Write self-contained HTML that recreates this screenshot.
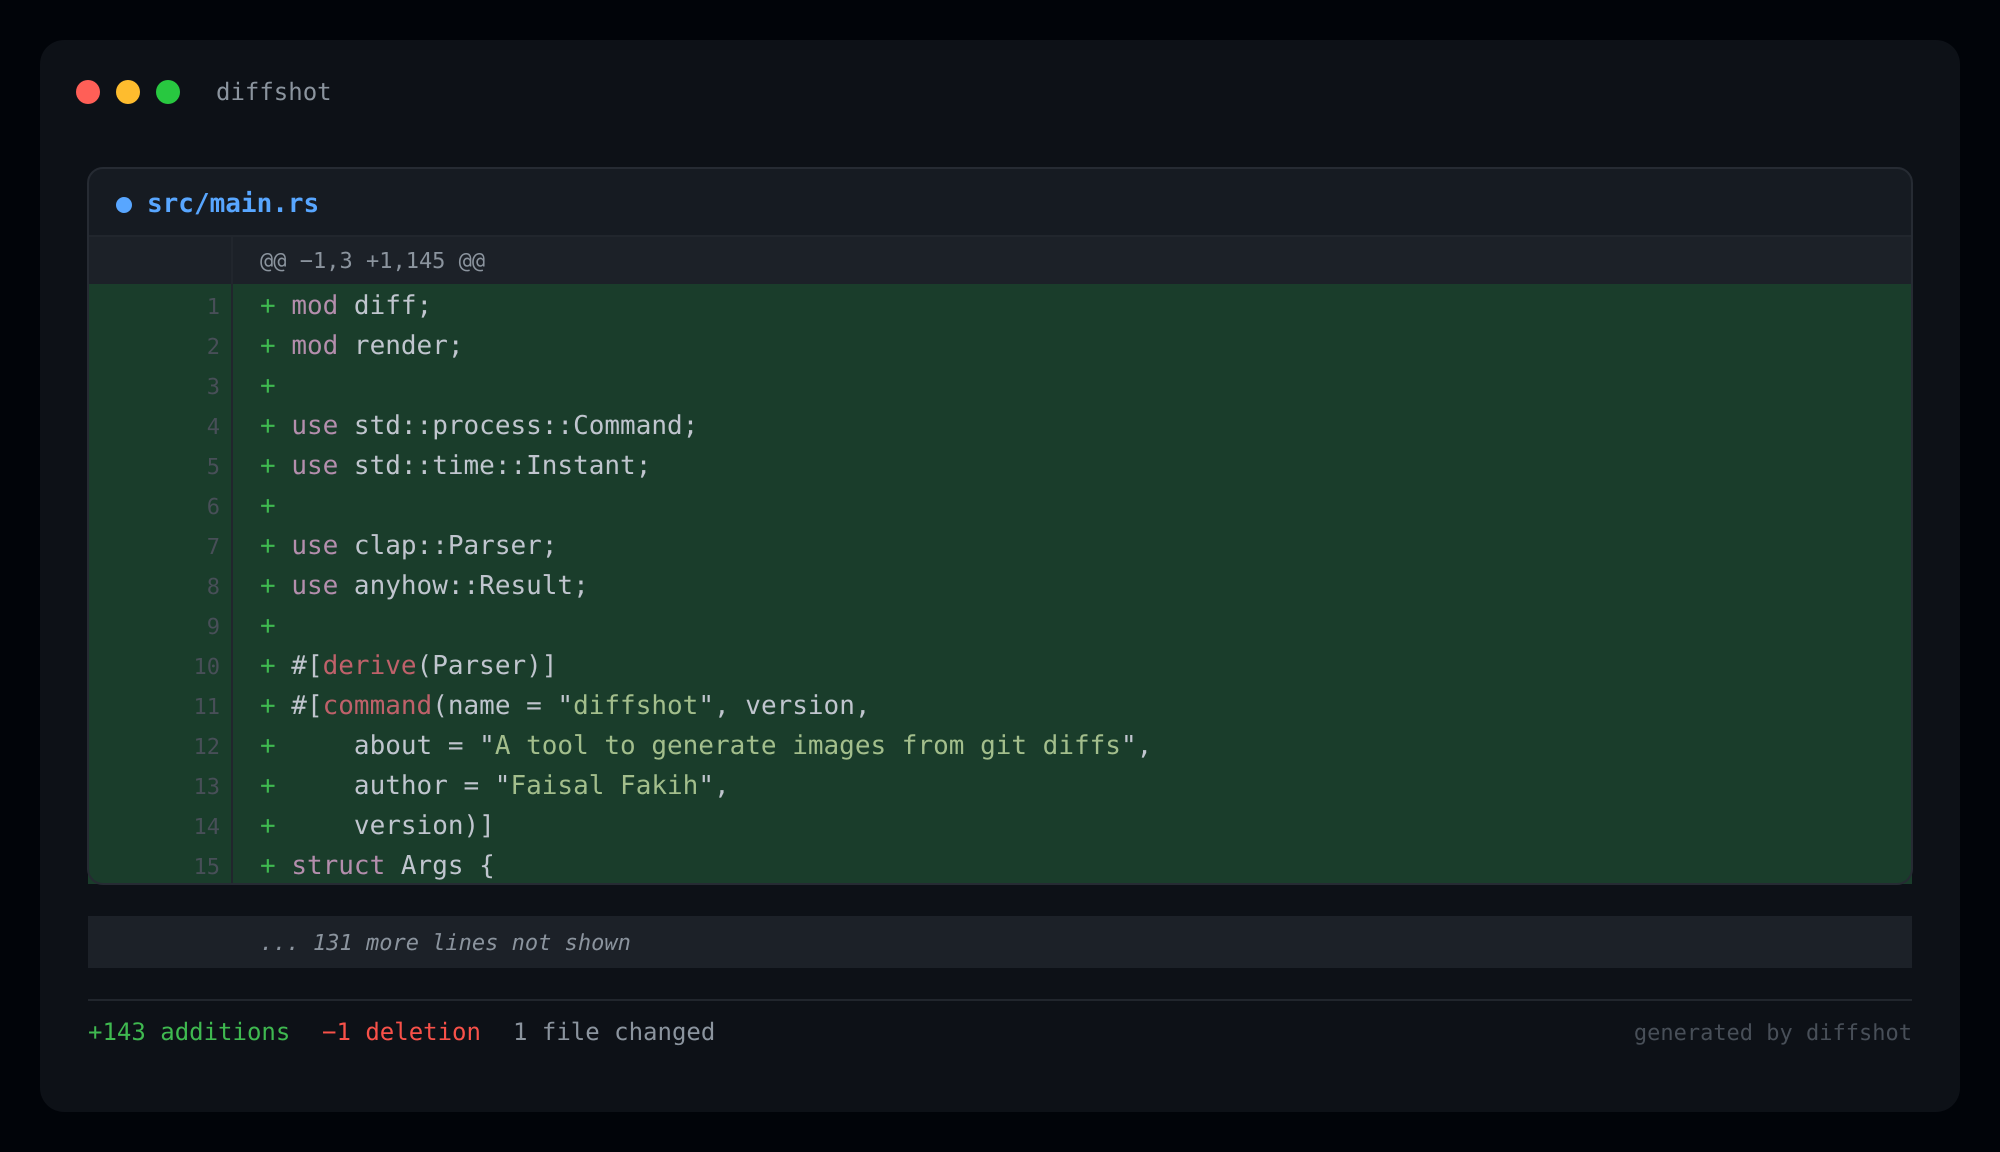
<!DOCTYPE html>
<html lang="en"><head><meta charset="utf-8"><title>diffshot</title>
<style>
*{box-sizing:border-box;margin:0;padding:0}
html,body{width:2000px;height:1152px;overflow:hidden;background:#010409}
body{position:relative;font-family:"DejaVu Sans Mono","Liberation Mono",monospace;text-rendering:geometricPrecision;font-kerning:none;font-variant-ligatures:none}
.a{position:absolute}
.t{position:absolute;white-space:pre}
#win{left:40px;top:40px;width:1920px;height:1072px;background:#0d1117;border-radius:24px}
.dot{width:24px;height:24px;border-radius:50%;top:80px}
#box{left:88px;top:168px;width:1824px;height:716px;background:#161b22;border-radius:15px}
#ring{left:87px;top:167px;width:1826px;height:718px;border:2px solid #262b33;border-radius:16px}
.row{position:absolute;left:88px;width:1824px;height:40px;background:#1a3d2b}
.g{position:absolute;left:143px;top:0;width:2px;height:100%;background:#21262d}
.n{position:absolute;left:0;width:132px;top:4px;text-align:right;font-size:22px;line-height:40px;color:#484f58}
.c{position:absolute;left:172px;top:3px;font-size:26px;line-height:39px;color:#c0c5ce;white-space:pre}
.p{color:#3fb950}.k{color:#b48ead}.s{color:#a3be8c}.r{color:#bf616a}
</style></head><body>
<div class="a" id="win"></div>
<div class="a dot" style="left:76px;background:#ff5f57"></div>
<div class="a dot" style="left:116px;background:#febc2e"></div>
<div class="a dot" style="left:156px;background:#28c840"></div>
<div class="t" style="left:216px;top:74px;font-size:24px;line-height:36px;color:#8b949e">diffshot</div>
<div class="a" id="box"></div>
<div class="a" style="left:116px;top:197px;width:16px;height:16px;border-radius:50%;background:#58a6ff"></div>
<div class="t" style="left:147px;top:184px;font-size:26px;line-height:40px;font-weight:700;color:#58a6ff">src/main.rs</div>
<div class="a" style="left:88px;top:235px;width:1824px;height:2px;background:#21262d"></div>
<div class="a" style="left:88px;top:237px;width:1824px;height:47px;background:#1c2128"><div class="g"></div>
<div class="t" style="left:172px;top:5px;font-size:22px;line-height:40px;color:#8b949e">@@ −1,3 +1,145 @@</div></div>
<div class="row" style="top:284px"><div class="g"></div><div class="n">1</div><div class="c"><span class="p">+</span> <span class="k">mod</span> diff;</div></div>
<div class="row" style="top:324px"><div class="g"></div><div class="n">2</div><div class="c"><span class="p">+</span> <span class="k">mod</span> render;</div></div>
<div class="row" style="top:364px"><div class="g"></div><div class="n">3</div><div class="c"><span class="p">+</span> </div></div>
<div class="row" style="top:404px"><div class="g"></div><div class="n">4</div><div class="c"><span class="p">+</span> <span class="k">use</span> std::process::Command;</div></div>
<div class="row" style="top:444px"><div class="g"></div><div class="n">5</div><div class="c"><span class="p">+</span> <span class="k">use</span> std::time::Instant;</div></div>
<div class="row" style="top:484px"><div class="g"></div><div class="n">6</div><div class="c"><span class="p">+</span> </div></div>
<div class="row" style="top:524px"><div class="g"></div><div class="n">7</div><div class="c"><span class="p">+</span> <span class="k">use</span> clap::Parser;</div></div>
<div class="row" style="top:564px"><div class="g"></div><div class="n">8</div><div class="c"><span class="p">+</span> <span class="k">use</span> anyhow::Result;</div></div>
<div class="row" style="top:604px"><div class="g"></div><div class="n">9</div><div class="c"><span class="p">+</span> </div></div>
<div class="row" style="top:644px"><div class="g"></div><div class="n">10</div><div class="c"><span class="p">+</span> #[<span class="r">derive</span>(Parser)]</div></div>
<div class="row" style="top:684px"><div class="g"></div><div class="n">11</div><div class="c"><span class="p">+</span> #[<span class="r">command</span>(name = "<span class="s">diffshot</span>", version,</div></div>
<div class="row" style="top:724px"><div class="g"></div><div class="n">12</div><div class="c"><span class="p">+</span>     about = "<span class="s">A tool to generate images from git diffs</span>",</div></div>
<div class="row" style="top:764px"><div class="g"></div><div class="n">13</div><div class="c"><span class="p">+</span>     author = "<span class="s">Faisal Fakih</span>",</div></div>
<div class="row" style="top:804px"><div class="g"></div><div class="n">14</div><div class="c"><span class="p">+</span>     version)]</div></div>
<div class="row" style="top:844px"><div class="g"></div><div class="n">15</div><div class="c"><span class="p">+</span> <span class="k">struct</span> Args {</div></div>
<div class="a" id="ring"></div>
<div class="a" style="left:88px;top:916px;width:1824px;height:52px;background:#1c2128"></div>
<div class="t" style="left:260px;top:924px;font-size:22px;line-height:40px;font-style:italic;color:#8b949e">... 131 more lines not shown</div>
<div class="a" style="left:88px;top:999px;width:1824px;height:2px;background:#21262d"></div>
<div class="t" style="left:88px;top:1014px;font-size:24px;line-height:36px;color:#3fb950">+143 additions</div>
<div class="t" style="left:322px;top:1014px;font-size:24px;line-height:36px;color:#f85149">−1 deletion</div>
<div class="t" style="left:513px;top:1014px;font-size:24px;line-height:36px;color:#8b949e">1 file changed</div>
<div class="t" style="right:88px;top:1016px;font-size:22px;line-height:36px;color:#484f58">generated by diffshot</div>
</body></html>
